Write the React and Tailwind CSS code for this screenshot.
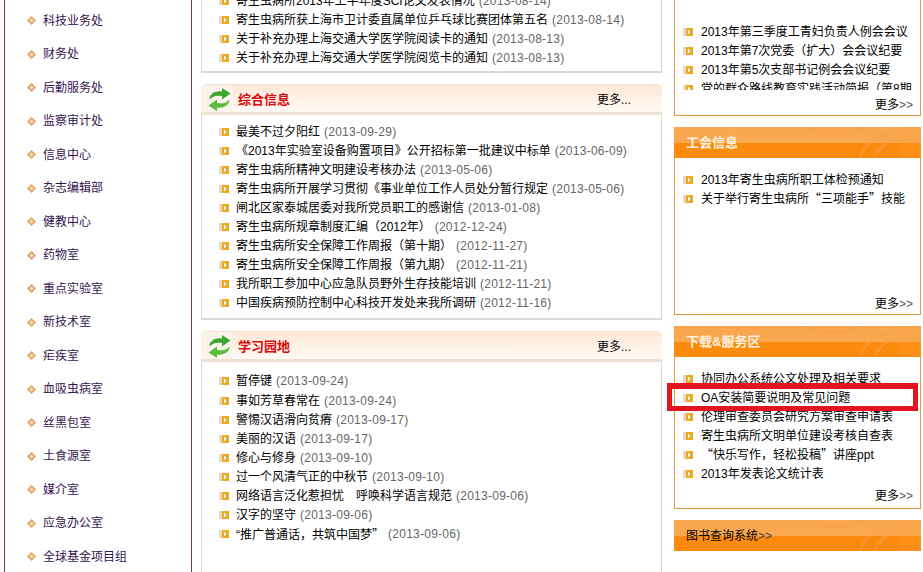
const SIDE_ITEMS = ["科技业务处", "财务处", "后勤服务处", "监察审计处", "信息中心", "杂志编辑部", "健教中心", "药物室", "重点实验室", "新技术室", "疟疾室", "血吸虫病室", "丝黑包室", "土食源室", "媒介室", "应急办公室", "全球基金项目组"];

const TOP_NEWS = [
  ["寄生虫病所2013年上半年度SCI论文发表情况", "(2013-08-14)"],
  ["寄生虫病所获上海市卫计委直属单位乒乓球比赛团体第五名", "(2013-08-14)"],
  ["关于补充办理上海交通大学医学院阅读卡的通知", "(2013-08-13)"],
  ["关于补充办理上海交通大学医学院阅览卡的通知", "(2013-08-13)"],
];

const GENERAL_NEWS = [
  ["最美不过夕阳红", "(2013-09-29)"],
  ["《2013年实验室设备购置项目》公开招标第一批建议中标单", "(2013-06-09)"],
  ["寄生虫病所精神文明建设考核办法", "(2013-05-06)"],
  ["寄生虫病所开展学习贯彻《事业单位工作人员处分暂行规定", "(2013-05-06)"],
  ["闸北区家泰城居委对我所党员职工的感谢信", "(2013-01-08)"],
  ["寄生虫病所规章制度汇编（2012年）", "(2012-12-24)"],
  ["寄生虫病所安全保障工作周报（第十期）", "(2012-11-27)"],
  ["寄生虫病所安全保障工作周报（第九期）", "(2012-11-21)"],
  ["我所职工参加中心应急队员野外生存技能培训", "(2012-11-21)"],
  ["中国疾病预防控制中心科技开发处来我所调研", "(2012-11-16)"],
];

const STUDY_NEWS = [
  ["暂停键", "(2013-09-24)"],
  ["事如芳草春常在", "(2013-09-24)"],
  ["警惕汉语滑向贫瘠", "(2013-09-17)"],
  ["美丽的汉语", "(2013-09-17)"],
  ["修心与修身", "(2013-09-10)"],
  ["过一个风清气正的中秋节", "(2013-09-10)"],
  ["网络语言泛化惹担忧　呼唤科学语言规范", "(2013-09-06)"],
  ["汉字的坚守", "(2013-09-06)"],
  ["“推广普通话，共筑中国梦”", "(2013-09-06)", true],
];

const PARTY_ITEMS = ["2013年第三季度工青妇负责人例会会议", "2013年第7次党委（扩大）会会议纪要", "2013年第5次支部书记例会会议纪要", "党的群众路线教育实践活动简报（第8期"];
const UNION_ITEMS = ["2013年寄生虫病所职工体检预通知", "关于举行寄生虫病所“三项能手”技能"];
const SERVICE_ITEMS = ["协同办公系统公文处理及相关要求", "OA安装简要说明及常见问题", "伦理审查委员会研究方案审查申请表", "寄生虫病所文明单位建设考核自查表", "“快乐写作，轻松投稿”讲座ppt", "2013年发表论文统计表"];

function Diamond() {
  return (
    <svg width="9" height="9" viewBox="0 0 9 9" className="shrink-0">
      <path d="M4.5 0 9 4.5 4.5 9 0 4.5Z" fill="#e2a063" />
      <path d="M4.5 2.2 6.8 4.5 4.5 6.8 2.2 4.5Z" fill="#f6dcae" />
    </svg>
  );
}

function Bullet() {
  return (
    <svg width="10" height="8" viewBox="0 0 10 8" className="shrink-0">
      <rect width="10" height="8" fill="#f0a81e" />
      <rect width="3" height="8" fill="#e2dad0" />
      <path d="M5 1.5 7.5 4 5 6.5Z" fill="#fff" />
    </svg>
  );
}

function RefreshIcon() {
  return (
    <svg width="23" height="23" viewBox="0 0 23 23" className="shrink-0">
      <path d="M1.5 11.5C1.5 6 7 2.5 14 3.5V0L22.5 5.5 14 11.5V8C8.5 7 4.5 8 1.5 11.5Z" fill="#3fa62f" />
      <path d="M21.5 11.5c0 5.500-5.500 9-12.500 8V23L.5 17.500 9 11.500V15c5.500 1 9.500 0 12.500-3.500Z" fill="#5dbb3f" />
    </svg>
  );
}

// curly quotes are full width in the original, Liberation draws them narrow
function Quoted({ text, narrowOpen }) {
  return text.split(/([“”])/).map((part, i) =>
    part === "”" || (part === "“" && !narrowOpen)
      ? <span key={i} className="font-['Noto_Sans_CJK_SC',sans-serif]">{part}</span>
      : part
  );
}

function NewsRow({ title, date, narrowOpen }) {
  return (
    <li className="flex h-[19.1px] items-center whitespace-nowrap">
      <Bullet />
      <span className="ml-[7px] text-black"><Quoted text={title} narrowOpen={narrowOpen} /></span>
      <span className="ml-[4px] tracking-[0.25px] text-[#666]">{date}</span>
    </li>
  );
}

function NewsCard({ title, rows, listClass }) {
  return (
    <section className="mt-[11px] flex flex-col">
      <header className="flex h-[31px] items-center rounded-t-[6px] border-t border-b-[3px] border-[#f0dfcf] border-b-[#eee0d3] bg-gradient-to-b from-[#fde8d6] to-[#fffaf5] pr-[31px]">
        <div className="flex h-full w-[31px] items-center rounded-tl-[6px] bg-[#fbf4ec] pt-[3px] pl-[7px]">
          <RefreshIcon />
        </div>
        <h2 className="mt-[3px] ml-[6px] text-[13px] font-bold text-[#d8090f]">{title}</h2>
        <a className="mt-[3px] ml-auto text-black">更多...</a>
      </header>
      <ul className={`border-x border-[#ddd8d2] pl-[17px] ${listClass}`}>
        {rows.map(([t, d, n]) => <NewsRow key={t} title={t} date={d} narrowOpen={n} />)}
      </ul>
    </section>
  );
}

function OrangeHeader({ children, className }) {
  return (
    <div className={`relative h-[31px] overflow-hidden bg-[linear-gradient(to_bottom,#f8a650_0,#fba94f_16px,#fc8a0c_16px,#fc8a0c_31px)] ${className}`}>
      <svg width="247" height="31" viewBox="0 0 247 31" className="absolute inset-0" fill="none">
        <path d="M186 31c4-12 14-22 30-24M200 31c4-8 10-16 22-20M130 0c20 8 40 10 60 0" stroke="#f7a04a" strokeWidth="3" opacity=".5" />
        <rect x="225" width="22" height="31" fill="#f9a040" opacity=".25" />
      </svg>
      <div className="absolute inset-0 flex items-center pl-[12px]">{children}</div>
    </div>
  );
}

function SideRow({ text }) {
  return (
    <li className="flex h-[19.1px] items-center whitespace-nowrap">
      <Bullet />
      <span className="ml-[8px] text-black"><Quoted text={text} /></span>
    </li>
  );
}

function More({ className }) {
  return (
    <div className={`mt-auto h-[16px] pr-[7px] text-right leading-[16px] text-black ${className}`}>
      更多<span className="text-[#555]">&gt;&gt;</span>
    </div>
  );
}

export default function App() {
  return (
    <div className="flex h-[572px] w-[923px] overflow-hidden bg-white font-['Liberation_Sans','Noto_Sans_CJK_SC',sans-serif] text-[12px]">
      {/* left nav */}
      <nav className="ml-[4px] h-full w-[188px] shrink-0 border-x border-[#7b3a3f] pt-[4px] pl-[22px]">
        <ul>
          {SIDE_ITEMS.map((s) => (
            <li key={s} className="flex h-[33.5px] items-center gap-[7px] text-[#35154f]">
              <Diamond />
              {s}
            </li>
          ))}
        </ul>
      </nav>

      {/* news */}
      <main className="ml-[9px] flex h-full w-[461px] shrink-0 flex-col">
        <ul className="-mt-[9px] border-x border-b-2 border-[#ddd8d2] pb-[3.6px] pl-[17px]">
          {TOP_NEWS.map(([t, d]) => <NewsRow key={t} title={t} date={d} />)}
        </ul>
        <NewsCard title="综合信息" rows={GENERAL_NEWS} listClass="border-b-2 pt-[7px] pb-[5px]" />
        <NewsCard title="学习园地" rows={STUDY_NEWS} listClass="h-[210px] pt-[10px]" />
      </main>

      {/* right column */}
      <aside className="relative ml-[12px] w-[247px] shrink-0">
        <div className="flex h-[116px] flex-col border-x border-b border-[#e09a45] pt-[22px] pl-[8px]">
          <ul className="h-[68px] overflow-hidden pr-[6px]">
            {PARTY_ITEMS.map((s) => <SideRow key={s} text={s} />)}
          </ul>
          <More className="mb-[2px]" />
        </div>

        <OrangeHeader className="mt-[11px]">
          <span className="text-[13px] font-bold text-[#fff3df]">工会信息</span>
        </OrangeHeader>
        <div className="flex h-[157px] flex-col border-x border-b border-[#e09a45] pt-[12px] pl-[8px]">
          <ul className="overflow-hidden pr-[6px]">
            {UNION_ITEMS.map((s) => <SideRow key={s} text={s} />)}
          </ul>
          <More className="mb-[2px]" />
        </div>

        <OrangeHeader className="mt-[11px]">
          <span className="text-[13px] font-bold text-[#fff3df]">下载&amp;服务区</span>
        </OrangeHeader>
        <div className="flex h-[152px] flex-col border-x border-b border-[#e09a45] pt-[12px] pl-[8px]">
          <ul className="overflow-hidden pr-[6px]">
            {SERVICE_ITEMS.map((s) => <SideRow key={s} text={s} />)}
          </ul>
          <More className="mb-[4px]" />
        </div>

        <OrangeHeader className="mt-[11px]">
          <span className="text-black">图书查询系统<span className="text-[#444]">&gt;&gt;</span></span>
        </OrangeHeader>

        {/* red annotation box */}
        <div className="absolute top-[383px] -left-[7px] h-[28px] w-[251px] border-[5px] border-t-[6px] border-[#e2141f]" />
      </aside>
    </div>
  );
}
